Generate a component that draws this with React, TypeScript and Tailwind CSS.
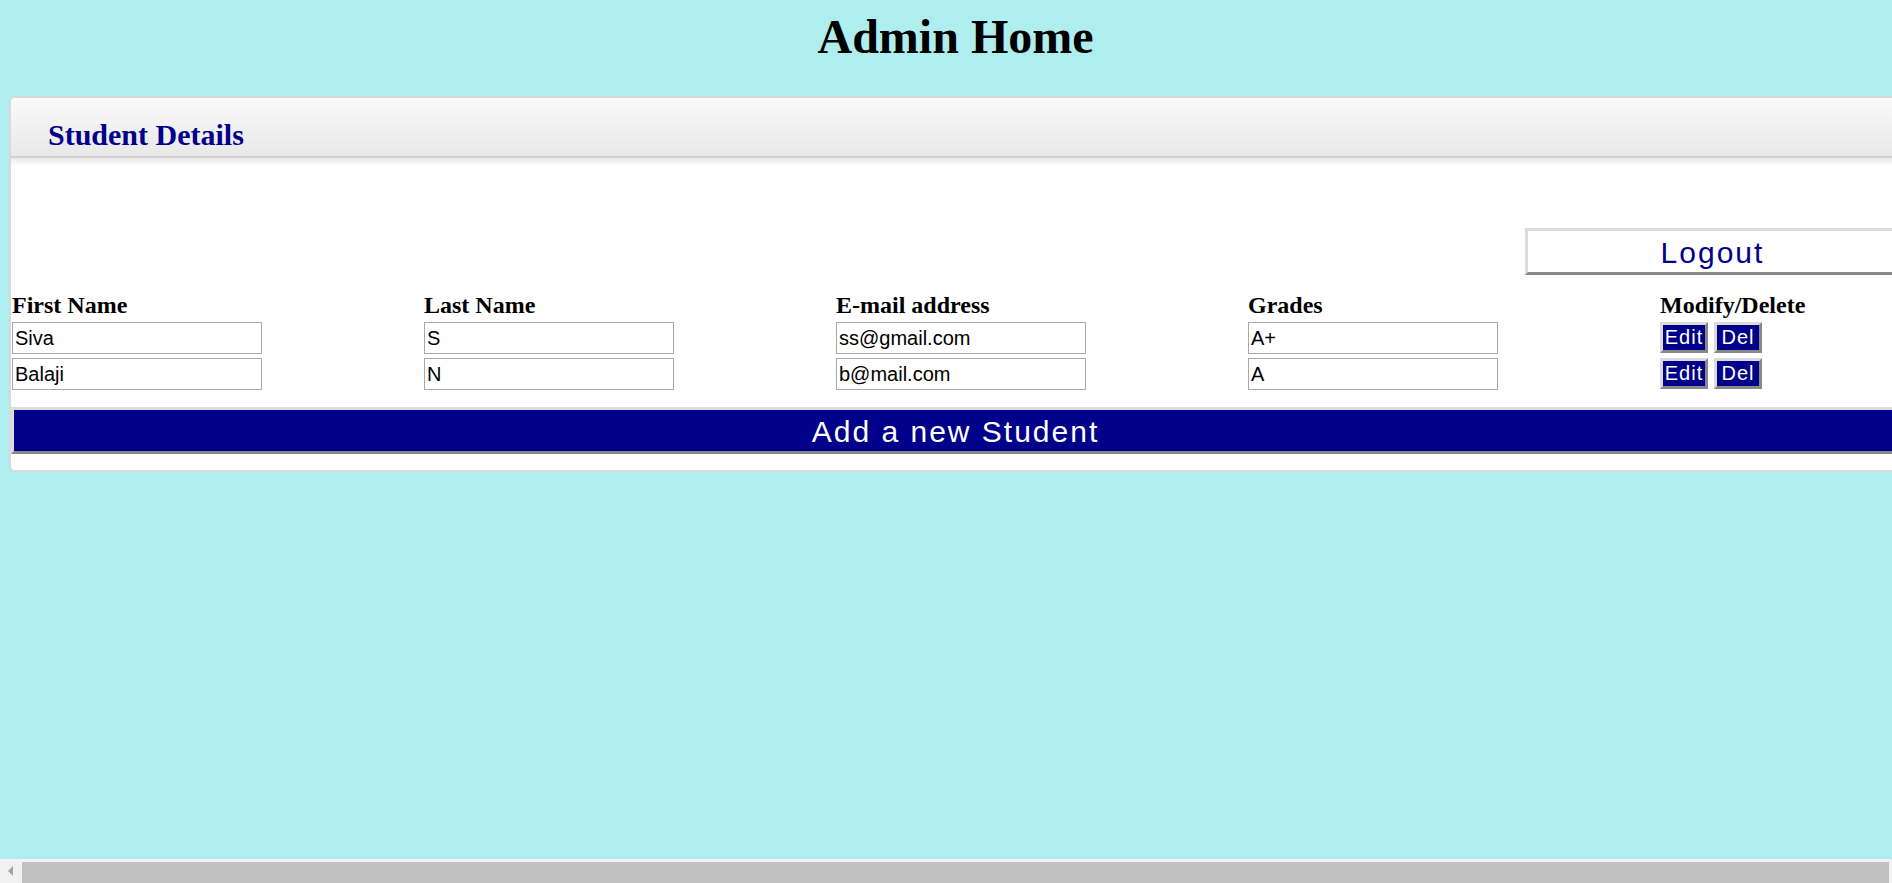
import React from "react";

const students = [
  { first: "Siva", last: "S", email: "ss@gmail.com", grade: "A+" },
  { first: "Balaji", last: "N", email: "b@mail.com", grade: "A" },
];

const serif = "font-['Liberation_Serif','Times_New_Roman',serif]";
const sans = "font-['Liberation_Sans',Arial,sans-serif]";

function Cell({ value }: { value: string }) {
  return (
    <input
      type="text"
      defaultValue={value}
      className={`${sans} w-[250px] h-[32px] border border-[#a9a9a9] bg-white px-[2px] text-[20px] text-black outline-none`}
    />
  );
}

function SmallButton({ label }: { label: string }) {
  return (
    <button
      className={`${sans} w-[48px] h-[31px] border-[3px] border-t-[#dcdcdc] border-l-[#dcdcdc] border-b-[#888888] border-r-[#888888] bg-[#00008b] text-[20px] leading-[25px] tracking-[1px] text-white`}
    >
      {label}
    </button>
  );
}

export default function App() {
  return (
    <div className="min-h-screen w-[1911px] bg-[#afeeee] pt-[9px] pb-[20px]">
      <h1 className={`${serif} text-center text-[48px] leading-[56px] font-bold text-black`}>
        Admin Home
      </h1>

      <div className="mx-[9px] mt-[31px] rounded-[6px] border-2 border-[#d9d9d9] bg-white overflow-hidden">
        {/* Panel header */}
        <div className="h-[60px] border-b-2 border-[#d2d2d2] bg-gradient-to-b from-[#fafafa] to-[#e8e8e8] pl-[37px] pt-[20px]">
          <h2 className={`${serif} text-[30px] leading-[34px] font-bold text-[#00008b]`}>
            Student Details
          </h2>
        </div>
        <div className="h-[8px] bg-gradient-to-b from-[#e9e9e9] to-white" />

        <div className="flex justify-end pt-[62px]">
          <button
            className={`${sans} w-[375px] h-[47px] border-[3px] border-t-[#dcdcdc] border-l-[#dcdcdc] border-b-[#888888] border-r-[#888888] bg-white pt-[2px] text-[30px] leading-[39px] tracking-[2px] text-[#00008b]`}
          >
            Logout
          </button>
        </div>

        {/* Student table */}
        <div className="pl-[1px] pt-[16px]">
          <div
            className={`${serif} grid grid-cols-[412px_412px_412px_412px_1fr] text-[24px] leading-[28px] font-bold text-black`}
          >
            <div>First Name</div>
            <div>Last Name</div>
            <div>E-mail address</div>
            <div>Grades</div>
            <div>Modify/Delete</div>
          </div>
          <div className="mt-[3px] flex flex-col gap-[4px]">
            {students.map((s) => (
              <div key={s.first} className="grid grid-cols-[412px_412px_412px_412px_1fr] items-start">
                <Cell value={s.first} />
                <Cell value={s.last} />
                <Cell value={s.email} />
                <Cell value={s.grade} />
                <div className="flex gap-[6px]">
                  <SmallButton label="Edit" />
                  <SmallButton label="Del" />
                </div>
              </div>
            ))}
          </div>
        </div>

        <div className="pt-[17px] pb-[16px]">
          <button
            className={`${sans} w-full h-[47px] border-[3px] border-t-[#dcdcdc] border-l-[#dcdcdc] border-b-[#888888] border-r-[#888888] bg-[#00008b] pt-[1px] text-[30px] leading-[39px] tracking-[2px] text-white`}
          >
            Add a new Student
          </button>
        </div>
      </div>

      {/* horizontal scrollbar as seen in the window */}
      <div className="fixed bottom-0 left-0 w-[1892px] h-[24px] bg-[#f1f1f1] flex items-center">
        <div className="w-[22px] flex justify-center">
          <svg width="6" height="10" viewBox="0 0 6 10">
            <path d="M5 0 L0 5 L5 10 Z" fill="#a3a3a3" />
          </svg>
        </div>
        <div className="w-[1867px] h-[21px] mt-[2px] bg-[#c1c1c1]" />
      </div>
    </div>
  );
}
